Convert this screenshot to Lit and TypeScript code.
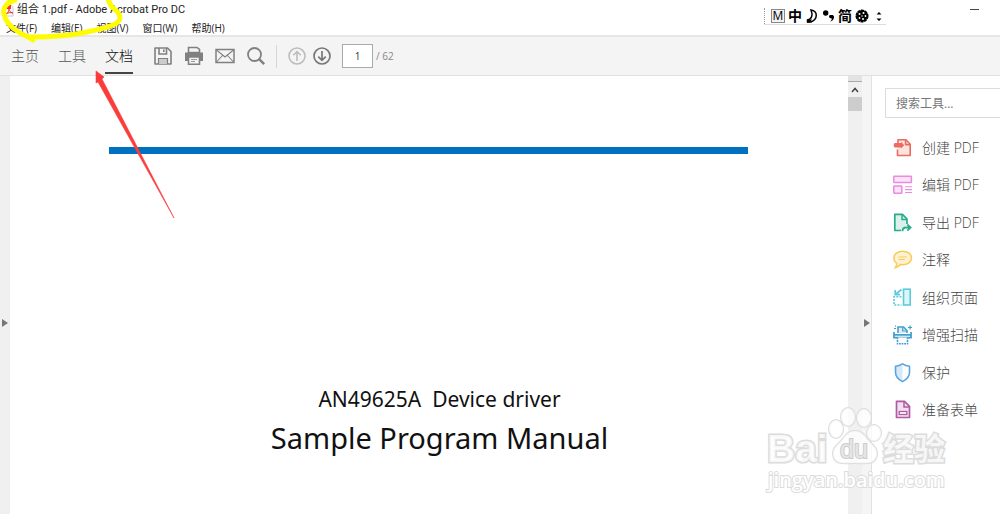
import { LitElement, html, css, svg } from "lit";
import { customElement, state } from "lit/decorators.js";

const toolIcons = {
  create: svg`<g fill="#fbe3e0" stroke="#ec6a5e" stroke-width="1.6" stroke-linejoin="round"><path d="M5 5.5V1.8h8l4.2 4.4v11.3H4.5v-6"/><path d="M12.6 2v4.6h4.6" fill="none"/></g><path d="M2 5h6v-1.200l3.200 3.400-3.200 3.400V9.500H2A1.500 1.500 0 0 1 .8 8V6.300A1.500 1.500 0 0 1 2 5z" fill="#ec6a5e"/>`,
  edit: svg`<g fill="#fae3f7" stroke="#e98bdf" stroke-width="1.5"><rect x=".8" y="1.200" width="17.600" height="6.400" rx=".5"/><rect x=".8" y="11" width="8" height="7.200" rx=".5"/><path d="M12 11.700h7M12 14.600h7M12 17.500h7" stroke-width="1.100"/></g>`,
  export: svg`<path d="M8 17.500H1.800V1.300h7.700l4.500 4.700v5" fill="#d9f1ea" stroke="#2bab8b" stroke-width="1.700" stroke-linejoin="round"/><path d="M9 1.500v5h5" fill="none" stroke="#2bab8b" stroke-width="1.500"/><path d="M9 16v-4h5" fill="#d9f1ea"/><path d="M9.500 18.200c0-2.600 1-3.700 3.500-3.700h4.500M14.300 11.500l3.300 3-3.300 3.200" fill="none" stroke="#2bab8b" stroke-width="1.800"/>`,
  comment: svg`<path d="M9.700 1.200c5 0 8.800 2.900 8.800 6.800s-3.800 6.800-8.800 6.800c-.8 0-1.600-.1-2.300-.2-1.400 1.700-3 2.700-5 3.100.9-1.300 1.400-2.700 1.300-4.400C1.900 12 .9 10.200.9 8c0-3.900 3.800-6.800 8.800-6.800z" fill="#fff2cf" stroke="#f9cb5e" stroke-width="1.500"/><path d="M5.500 7h8.500M5.500 9.500h6.500" stroke="#f9cb5e" stroke-width="1.100"/>`,
  organize: svg`<rect x="10.500" y="1.200" width="6.700" height="15.800" fill="#d9f6f9" stroke="#5ccbdc" stroke-width="1.600"/><path d="M8.500 8.800H1v8.200h7.500" fill="none" stroke="#5ccbdc" stroke-width="1.600" stroke-dasharray="2 1.200"/><path d="M8.500 1.500 3 6M2.200 2v4.700h5" fill="none" stroke="#5ccbdc" stroke-width="1.700"/>`,
  scan: svg`<g fill="none" stroke="#459fce" stroke-width="1.600"><path d="M5 8V2h5.500L14 5.500V8" fill="#dceff8"/><path d="M9.700 2v4H14" stroke-width="1.200"/><path d="M1 7v5.700h17V7M1 9.800h17" stroke-width="1.800"/><path d="M4.500 12.500v6.300h10v-6.300" fill="#fff" stroke-dasharray="1.800 .8"/><path d="M17 .5v4M15 2.500h4M1 3.500h2M2 1.200h1" stroke-width="1.200"/></g>`,
  protect: svg`<path d="M9.500.9v17.700c-4.400-2.200-7-5.100-7-9.400v-6c2.500-.1 5-.9 7-2.300z" fill="#d6e9fa"/><path d="M9.500.9c2 1.400 4.500 2.200 7 2.300v6c0 4.300-2.600 7.200-7 9.400-4.400-2.200-7-5.100-7-9.400v-6c2.500-.1 5-.9 7-2.300z" fill="none" stroke="#5aa4e2" stroke-width="1.600" stroke-linejoin="round"/>`,
  form: svg`<path d="M3.500 1.300h8l5 5v11.200h-13z" fill="#f1e1ef" stroke="#b05ba5" stroke-width="1.700" stroke-linejoin="round"/><path d="M11 1.500V7h5.500" fill="none" stroke="#b05ba5" stroke-width="1.500"/><rect x="6.200" y="11.500" width="7.600" height="3" fill="#fff" stroke="#b05ba5" stroke-width="1.300"/>`,
};

const tools: { label: string; icon: keyof typeof toolIcons }[] = [
  { label: "创建 PDF", icon: "create" },
  { label: "编辑 PDF", icon: "edit" },
  { label: "导出 PDF", icon: "export" },
  { label: "注释", icon: "comment" },
  { label: "组织页面", icon: "organize" },
  { label: "增强扫描", icon: "scan" },
  { label: "保护", icon: "protect" },
  { label: "准备表单", icon: "form" },
];

const menus = ["文件(F)", "编辑(E)", "视图(V)", "窗口(W)", "帮助(H)"];
const tabs = ["主页", "工具", "文档"];

@customElement("app-root")
export class AppRoot extends LitElement {
  @state() private activeTab = "文档";

  static styles = css`
    :host {
      display: block;
      font-family: "Open Sans", "Noto Sans CJK SC", sans-serif;
      color: #222;
    }
    * { box-sizing: border-box; }
    button, input { font: inherit; color: inherit; margin: 0; padding: 0; border: 0; background: none; }
    svg { display: block; flex: none; }
    .window { position: relative; display: flex; flex-direction: column; height: 100vh; overflow: hidden; background: #fff; }
    .caption { display: flex; flex: none; justify-content: space-between; height: 35px; }
    .titlebar { display: flex; align-items: center; gap: 3px; height: 20px; padding-left: 4px; font-family: Roboto, "Noto Sans CJK SC", sans-serif; font-size: 11px; line-height: 18px; white-space: nowrap; }
    .title { margin: 0; font: inherit; }
    .menus { display: flex; gap: 14px; height: 15px; padding-left: 6px; font-size: 10px; line-height: 14px; }
    .system { display: flex; align-items: flex-start; gap: 84px; padding-right: 20px; }
    .ime { display: flex; align-items: center; gap: 3px; height: 18px; margin-top: 7px; border-bottom: 1px solid #ddd; color: #000; font-size: 14px; font-weight: 700; line-height: 16px; }
    .grip { height: 16px; border-left: 1px dotted #999; margin-right: 3px; }
    .mode { width: 14px; height: 14px; border: 1px solid #888; font-size: 12px; font-weight: 400; line-height: 12px; text-align: center; background: #f2f2f2; }
    .minimise { width: 10px; height: 18px; }
    .toolbar { display: flex; align-items: stretch; height: 41px; flex: none; border-top: 2px solid #e6e6e6; border-bottom: 1px solid #e0e0e0; background: #f4f4f4; color: #848484; }
    .tabs { display: flex; gap: 19px; padding-left: 11px; }
    .tab { height: 37px; border-bottom: 2px solid transparent; font-size: 14px; font-weight: 300; color: #555; white-space: nowrap; }
    .tab.active { color: #111; border-color: #444; }
    .actions { display: flex; align-items: center; gap: 11px; padding-left: 20px; }
    .pager { display: flex; align-items: center; gap: 5px; margin-left: 10px; }
    .divider { width: 1px; height: 23px; margin-right: 5px; background: #d6d6d6; }
    .page-input { width: 31px; height: 24px; margin-left: 5px; border: 1px solid #a9a9a9; background: #fff; color: #333; font-size: 10px; text-align: center; }
    .total { margin-left: -2px; font-size: 10px; color: #888; white-space: nowrap; }
    .workspace { display: flex; flex: 1; min-height: 0; }
    .rail { display: flex; align-items: center; justify-content: center; flex: none; width: 10px; background: #f0f0f0; padding-top: 56px; }
    .rail.right { background: #f5f5f5; border-right: 1px solid #e2e2e2; }
    .page { flex: 1; min-width: 0; padding: 71px 100px 0 99px; color: #111; }
    .rule { height: 7px; background: #0070c0; }
    .cover { display: flex; flex-direction: column; align-items: center; gap: 4px; padding: 230px 0 0 22px; font-family: "Noto Sans", sans-serif; white-space: pre; }
    .subtitle { margin: 0; font-size: 21px; line-height: 30px; }
    .heading { margin: 0; font-size: 29px; font-weight: 400; line-height: 40px; }
    .scroll { flex: none; width: 14px; background: #f0f0f0; }
    .split { height: 6px; background: #e3e3e3; border-bottom: 1px solid #aaa; }
    .arrow { display: grid; place-items: center; width: 14px; height: 15px; }
    .thumb { height: 14px; background: #cdcdcd; }
    .panel { flex: none; width: 128px; padding-top: 12px; }
    .search { width: 100%; height: 30px; margin-left: 13px; padding-left: 10px; border: 1px solid #dcdcdc; font-size: 12px; }
    .search::placeholder { color: #777; opacity: 1; }
    .tools { display: grid; grid-template-rows: repeat(8, 1fr); height: 300px; margin: 11px 0 0; padding: 0 0 0 21px; list-style: none; }
    .tool { display: flex; align-items: center; gap: 8px; width: 100%; height: 100%; font-size: 14px; font-weight: 300; line-height: 20px; color: #444; white-space: nowrap; }
    .ink { position: absolute; left: 0; top: 0; pointer-events: none; }
    .watermark { position: absolute; right: 48px; bottom: 14px; pointer-events: none; }
    .mark { fill: #fff; fill-opacity: 0.75; stroke: #dcdcdc; stroke-width: 3; paint-order: stroke; font-family: "Liberation Sans", "Noto Sans CJK SC", sans-serif; font-weight: 700; }
    .paw { stroke-width: 2; }
    .du { fill: #eee; stroke: #ccc; stroke-width: 2; font-weight: 400; }
    .site { font-family: "Open Sans", sans-serif; font-weight: 600; stroke-width: 2; fill-opacity: 1; }
  `;

  private caption() {
    return html`<header class="caption">
      <div>
        <div class="titlebar">
          <svg width="10" height="13" viewBox="0 0 10 13"><path d="M1 1h6l2 2v9H1z" fill="#fff" stroke="#ccc"/><path d="M0 1h7v4H0z" fill="#e33"/><path d="M2 10c2-1 3-3 3-5 0 2 1 3 4 4-3-1-5 0-7 1z" fill="none" stroke="#e33"/></svg>
          <h1 class="title">组合 1.pdf - Adobe Acrobat Pro DC</h1>
        </div>
        <nav class="menus">${menus.map((m) => html`<button>${m}</button>`)}</nav>
      </div>
      <div class="system">
        <div class="ime">
          <span class="grip"></span><span class="mode">M</span><span>中</span>
          <svg width="14" height="14" viewBox="0 0 14 14"><path d="M6 1c7 1 7 9 0 12H2.500v-2C7 10 8 6 6 1z" fill="none" stroke="#000" stroke-width="1.500"/><path d="M2 10.500h5l-2 3H2z"/></svg>
          <svg width="13" height="14" viewBox="0 0 13 14"><circle cx="3.700" cy="4" r="2.700"/><path d="M8 6h2.500c3 1 1.500 6-2.500 6.500 1.500-1.200 2-2 1.700-3C6.500 9.500 6.500 6.500 8 6z"/></svg>
          <span>简</span>
          <svg width="14" height="14" viewBox="0 0 14 14"><circle cx="7" cy="7" r="5.700" stroke="#000" stroke-width="1.600" stroke-dasharray="3 .6"/><g fill="#fff"><circle cx="4.500" cy="5" r="1"/><circle cx="8.500" cy="4" r="1"/><circle cx="10.500" cy="7" r=".9"/><circle cx="4.500" cy="9" r=".9"/><circle cx="8" cy="10" r="1"/><circle cx="7" cy="7" r=".7"/></g></svg>
          <svg width="14" height="14" viewBox="0 0 14 14"><path d="M4.500 5.500 7 3l2.500 2.500zM4.500 9.500 7 12l2.500-2.500z"/></svg>
        </div>
        <button class="minimise" aria-label="最小化"><svg width="10" height="18" viewBox="0 0 10 18"><path d="M0 9.500h9" stroke="#444"/></svg></button>
      </div>
    </header>`;
  }

  private toolbar() {
    return html`<div class="toolbar">
      <nav class="tabs">
        ${tabs.map((t) => html`<button class="tab ${t === this.activeTab ? "active" : ""}" @click=${() => (this.activeTab = t)}>${t}</button>`)}
      </nav>
      <div class="actions">
        <button aria-label="保存"><svg width="20" height="20" viewBox="0 0 20 20" fill="none" stroke="#808080" stroke-width="1.600"><path d="M2 2h12.500L18 5.500V18H2z" stroke-linejoin="round"/><path d="M6 2v6h7.500V2M10.800 3.500v2.500"/><path d="M5.500 18v-5.500h9V18" fill="#ccc" stroke-width="1.200"/></svg></button>
        <button aria-label="打印"><svg width="20" height="20" viewBox="0 0 20 20"><path d="M1 6.500h18v8.500H1z" fill="#808080"/><path d="M4.500 6.500v-5h8.500l2.500 2v3z" fill="#f4f4f4" stroke="#808080" stroke-width="1.600"/><path d="M4.500 11h11v7.200h-11z" fill="#f4f4f4" stroke="#808080" stroke-width="1.600"/><path d="M7 13.500h6M7 15.500h4" stroke="#999"/></svg></button>
        <button aria-label="邮件"><svg width="20" height="20" viewBox="0 0 20 20" fill="none" stroke="#808080"><path d="M1 3.500h18v13H1z" stroke-width="1.500"/><path d="m1.500 4 8.500 7 8.500-7M1.500 16l6-6.500m11 6.500-6-6.500" stroke-width="1.100"/></svg></button>
        <button aria-label="搜索"><svg width="20" height="20" viewBox="0 0 20 20" fill="none" stroke="#808080"><circle cx="8.500" cy="8.500" r="6.500" stroke-width="1.800"/><path d="m13.200 13.200 5 5" stroke-width="2.500"/></svg></button>
      </div>
      <div class="pager">
        <span class="divider"></span>
        <button aria-label="上一页"><svg width="20" height="20" viewBox="0 0 20 20" fill="none" stroke="#bdbdbd" stroke-width="1.600"><circle cx="10" cy="10" r="8"/><path d="M10 15V6M6.300 9.300 10 5.700l3.700 3.600"/></svg></button>
        <button aria-label="下一页"><svg width="20" height="20" viewBox="0 0 20 20" fill="none" stroke="#777" stroke-width="1.700"><circle cx="10" cy="10" r="8"/><path d="M10 5v9M6.300 10.700l3.700 3.600 3.700-3.600"/></svg></button>
        <input class="page-input" aria-label="页码" .value=${"1"} />
        <span class="total">/ 62</span>
      </div>
    </div>`;
  }

  render() {
    return html`<div class="window">
      ${this.caption()} ${this.toolbar()}
      <div class="workspace">
        <button class="rail" aria-label="展开左侧"><svg width="6" height="8" viewBox="0 0 6 8"><path d="M0 0l6 4-6 4z" fill="#777"/></svg></button>
        <main class="page">
          <div class="rule"></div>
          <div class="cover"><p class="subtitle">AN49625A  Device driver</p><h2 class="heading">Sample Program Manual</h2></div>
        </main>
        <div class="scroll">
          <div class="split"></div>
          <button class="arrow" aria-label="向上滚动"><svg width="8" height="6" viewBox="0 0 8 6"><path d="m1 5 3-3.500L7 5" fill="none" stroke="#444" stroke-width="1.500"/></svg></button>
          <div class="thumb"></div>
        </div>
        <button class="rail right" aria-label="收起右侧"><svg width="6" height="8" viewBox="0 0 6 8"><path d="M0 0l6 4-6 4z" fill="#777"/></svg></button>
        <aside class="panel">
          <input class="search" type="text" aria-label="搜索工具" placeholder="搜索工具..." />
          <ul class="tools">
            ${tools.map((t) => html`<li><button class="tool"><svg width="21" height="20" viewBox="0 0 21 20">${toolIcons[t.icon]}</svg><span>${t.label}</span></button></li>`)}
          </ul>
        </aside>
      </div>
      <svg class="ink" width="200" height="230" viewBox="0 0 200 230" aria-hidden="true">
        <path d="M15 0C8 2 2 7 4 14c1 8 8 14 16 19 5 3 9 4 13 7l-3-3c18 0 39-1 57-5 15-3 33-7 33-14 0-6-5-8-8-11-2-3-3-5-4-8" fill="none" stroke="#fffb00" stroke-width="5" stroke-linecap="round" stroke-linejoin="round"/>
        <path d="M96 71l8 6-2 2 72 139-76-136-2 1z" fill="#fa3c3a" stroke="#fa3c3a" stroke-width=".6"/>
      </svg>
      <svg class="watermark" width="188" height="96" viewBox="0 0 188 96" aria-hidden="true">
        <g class="mark">
          <text x="3" y="58" font-size="39">Bai</text>
          <g class="paw"><ellipse cx="72" cy="25" rx="7" ry="9"/><ellipse cx="84" cy="13" rx="7" ry="9"/><ellipse cx="100" cy="14" rx="7" ry="9"/><ellipse cx="110" cy="29" rx="7" ry="8"/><path d="M91 27c8 0 10 6 15 11 5 5 9 9 6 16-3 7-11 5-21 5s-18 2-21-5c-3-7 1-11 6-16 5-5 7-11 15-11z"/></g>
          <text class="du" x="76" y="54" font-size="25">du</text>
          <text x="119" y="56" font-size="31">经验</text>
          <text class="site" x="4" y="83" font-size="20">jingyan.baidu.com</text>
        </g>
      </svg>
    </div>`;
  }
}
